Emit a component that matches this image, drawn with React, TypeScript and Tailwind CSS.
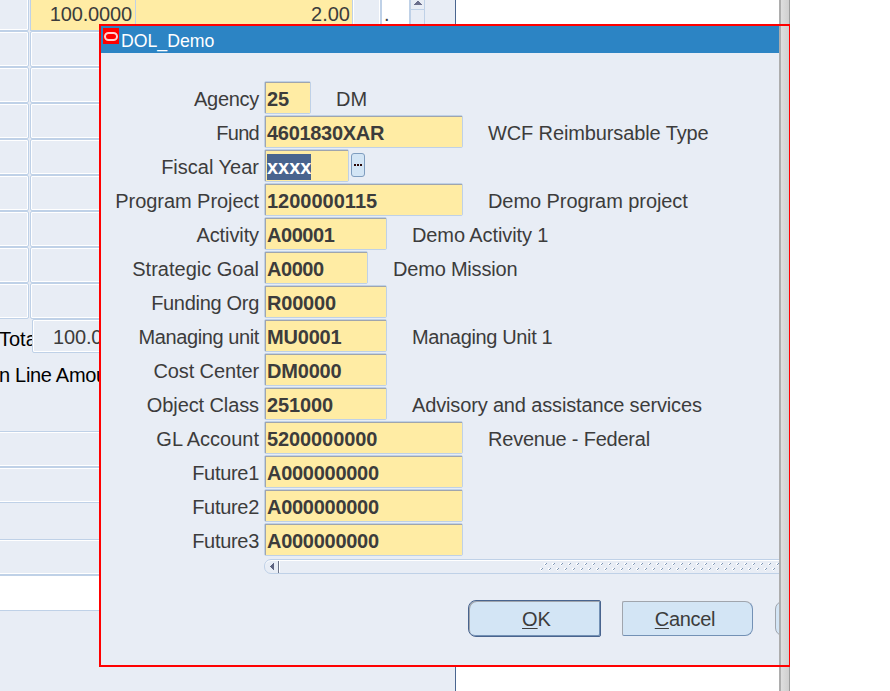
type Field = {
  label: string;
  labelFit?: string;
  value: string;
  valueFit?: string;
  width: string;
  note?: string;
  noteFit?: string;
  selected?: boolean;
};

const fields: Field[] = [
  { label: 'Agency', labelFit: 'tracking-[-0.3px]', value: '25', width: 'w-[47px]', note: 'DM' },
  { label: 'Fund', labelFit: 'tracking-[-0.7px]', value: '4601830XAR', valueFit: 'tracking-[-0.3px]', width: 'w-[199px]', note: 'WCF Reimbursable Type', noteFit: 'tracking-[-0.12px]' },
  { label: 'Fiscal Year', value: 'xxxx', width: 'w-[85px]', selected: true },
  { label: 'Program Project', labelFit: 'tracking-[-0.05px]', value: '1200000115', width: 'w-[199px]', note: 'Demo Program project', noteFit: 'tracking-[-0.07px]' },
  { label: 'Activity', labelFit: 'tracking-[-0.1px]', value: 'A00001', valueFit: 'tracking-[-0.45px]', width: 'w-[123px]', note: 'Demo Activity 1', noteFit: 'tracking-[-0.1px]' },
  { label: 'Strategic Goal', value: 'A0000', valueFit: 'tracking-[-0.45px]', width: 'w-[104px]', note: 'Demo Mission', noteFit: 'tracking-[-0.2px]' },
  { label: 'Funding Org', labelFit: 'tracking-[-0.3px]', value: 'R00000', valueFit: 'tracking-[-0.2px]', width: 'w-[123px]' },
  { label: 'Managing unit', labelFit: 'tracking-[-0.4px]', value: 'MU0001', valueFit: 'tracking-[-0.2px]', width: 'w-[123px]', note: 'Managing Unit 1', noteFit: 'tracking-[-0.35px]' },
  { label: 'Cost Center', labelFit: 'tracking-[-0.1px]', value: 'DM0000', valueFit: 'tracking-[-0.2px]', width: 'w-[123px]' },
  { label: 'Object Class', labelFit: 'tracking-[-0.1px]', value: '251000', valueFit: 'tracking-[-0.1px]', width: 'w-[123px]', note: 'Advisory and assistance services', noteFit: 'tracking-[-0.15px]' },
  { label: 'GL Account', value: '5200000000', valueFit: 'tracking-[-0.1px]', width: 'w-[199px]', note: 'Revenue - Federal', noteFit: 'tracking-[-0.22px]' },
  { label: 'Future1', labelFit: 'tracking-[-0.3px]', value: 'A000000000', valueFit: 'tracking-[-0.28px]', width: 'w-[199px]' },
  { label: 'Future2', labelFit: 'tracking-[-0.3px]', value: 'A000000000', valueFit: 'tracking-[-0.28px]', width: 'w-[199px]' },
  { label: 'Future3', labelFit: 'tracking-[-0.3px]', value: 'A000000000', valueFit: 'tracking-[-0.28px]', width: 'w-[199px]' },
];

const cell = 'shrink-0 rounded-[2px] border border-[#bfd1e7] shadow-[inset_0_0_0_1px_#fff]';

function LedgerTable() {
  return (
    <div className="-mt-[5px]">
      <div className="flex h-9">
        <div className={`${cell} -ml-1 mr-px w-[33px]`} />
        <div className="flex h-9 w-[105px] shrink-0 items-end justify-end border border-r-0 border-[#bfd1e7] bg-[#ffeca4] pb-[4px] pr-[3px]">
          <span className="leading-[23px] tracking-[-0.15px]">100.0000</span>
        </div>
        <div className="flex h-9 w-[218px] shrink-0 items-end justify-end border border-[#bfd1e7] bg-[#ffeca4] pb-[4px] pr-[2px]">
          <span className="leading-[23px]">2.00</span>
        </div>
        <div className="h-9 w-[27px] shrink-0 border-x border-white" />
        <div className="flex h-9 w-[31px] shrink-0 items-end border-x-2 border-[#bfd1e7] bg-white pb-[5px] pl-[2px]">
          <span className="leading-[23px]">.</span>
        </div>
        <div className="flex h-9 w-[14px] shrink-0 flex-col border-r border-[#bfd1e7]">
          <div className="flex h-[15px] items-end justify-center border-b border-[#bfd1e7] pb-[4px]">
            <svg width="8" height="4" viewBox="0 0 8 4" shapeRendering="crispEdges">
              <path d="M3 0h2v1h1v1h1v1h1v1H0V3h1V2h1V1h1z" fill="#6b6f8c" />
            </svg>
          </div>
        </div>
      </div>
      {Array.from({ length: 8 }, (_, i) => (
        <div key={i} className="flex h-9">
          <div className={`${cell} -ml-1 mr-px w-[33px]`} />
          <div className={`${cell} w-[105px]`} />
        </div>
      ))}
    </div>
  );
}

function LedgerWindow() {
  return (
    <div className="h-[691px] w-[456px] overflow-hidden border-r border-[#4a6690] bg-[#e8edf5]">
      <LedgerTable />
      <div className="flex h-[34px]">
        <div className="w-8 whitespace-nowrap pt-[9px] text-black">
          <span className="-ml-px block leading-[23px]">Tota</span>
        </div>
        <div className={`${cell} relative w-[120px] bg-[#e8edf5] pl-[20px] pt-[6px]`}>
          <span className="block leading-[23px] tracking-[-0.15px]">100.0000</span>
        </div>
      </div>
      <div className="h-[78px] whitespace-nowrap pt-[11px] text-black">
        <span className="-ml-px block leading-[23px] tracking-[-0.3px]">n Line Amount</span>
      </div>
      <div className={`${cell} -ml-1 h-9`} />
      <div className={`${cell} -ml-1 h-9`} />
      <div className={`${cell} -ml-1 mt-9 h-9`} />
      <div className={`${cell} -ml-1 h-9 bg-white`} />
    </div>
  );
}

function FieldRow({ label, labelFit = '', value, valueFit = '', width, note, noteFit = '', selected }: Field) {
  return (
    <div className="flex h-[34px] items-start whitespace-nowrap">
      <div className={`${labelFit} w-[158px] shrink-0 pt-[7px] text-right leading-[23px]`}>{label}</div>
      <div className={`${width} ml-[5px] h-[33px] shrink-0 rounded-[2px] border border-[#bfd1e7]`}>
        <div className="h-[31px] border-l border-t border-[#a0a5ad] bg-[#ffeca4] pl-px pt-[3px] font-bold">
          <span
            className={
              selected
                ? 'block h-[26px] w-[44px] bg-[#49648e] leading-[27px] text-white'
                : `${valueFit} block leading-[27px]`
            }
          >
            {value}
          </span>
        </div>
      </div>
      {selected && (
        <button className="ml-[2px] mt-[4px] flex h-[24px] w-[14px] items-center justify-center gap-px rounded-[3px] border border-[#7f9dbf] bg-[#d3e5f5] pb-[1px]">
          <span className="size-[2px] bg-[#2a0808]" />
          <span className="size-[2px] bg-[#2a0808]" />
          <span className="size-[2px] bg-[#2a0808]" />
        </button>
      )}
      {note && <div className={`${noteFit} ml-[25px] pt-[7px] leading-[23px]`}>{note}</div>}
    </div>
  );
}

function HorizontalScrollbar() {
  return (
    <div className="ml-[163px] mt-[2px] flex h-[15px] w-[530px] items-center rounded-l-[7px] border border-[#bfd1e7] pl-[5px] shadow-[inset_0_1px_0_#fff]">
      <svg width="4" height="7" viewBox="0 0 4 7" shapeRendering="crispEdges">
        <path d="M0 3h1V2h1V1h1V0h1v7H3V6H2V5H1V4H0z" fill="#5f6480" />
      </svg>
      <div className="ml-[4px] h-[12px] w-px bg-[#6d7488]" />
      <div className="h-[11px] w-px bg-white" />
      <svg className="ml-[260px]" width="245" height="8" shapeRendering="crispEdges">
        <defs>
          <pattern id="grip" width="8" height="8" patternUnits="userSpaceOnUse">
            <path d="M4 0h2v2H4zM5 2h1v1H5zM0 5h2v2H0zM1 7h1v1H1z" fill="#fff" />
            <path d="M6 0h1v1H6zM5 1h1v1H5zM2 5h1v1H2zM1 6h1v1H1z" fill="#7f97b5" />
          </pattern>
        </defs>
        <rect width="245" height="8" fill="url(#grip)" />
      </svg>
    </div>
  );
}

function Dialog() {
  return (
    <div className="absolute left-[99px] top-[24px] h-[643px] w-[691px] border-2 border-r border-[#ff0000]">
      <div className="h-[639px] w-[678px] overflow-hidden bg-[#e8edf5]">
        <div className="flex h-[27px] bg-[#2c84c4] text-white">
          <div className="ml-[2px] mt-[2px] flex size-[16px] items-center justify-center bg-[#ff0000]">
            <div className="h-[9px] w-[14px] rounded-[5px] border-2 border-[#ffd0d0]" />
          </div>
          <span className="ml-[2px] pt-[4px] text-[17.7px] leading-[22px]">DOL_Demo</span>
        </div>
        <div className="mt-[28px]">
          {fields.map((f) => (
            <FieldRow key={f.label} {...f} />
          ))}
        </div>
        <HorizontalScrollbar />
        <div className="ml-[367px] mt-[26px] flex w-[500px] items-start">
          <button className="h-[37px] w-[133px] rounded-l-[8px] rounded-r-[2px] border border-[#49648e] bg-[#d3e5f5] pl-[4px] leading-[34px] shadow-[inset_1px_1px_0_#a0a5ad,inset_-1px_-1px_0_#7391b5]">
            <span className="underline decoration-1 underline-offset-[2px]">O</span>K
          </button>
          <button className="ml-[21px] mt-px h-[35px] w-[131px] rounded-l-[2px] rounded-r-[8px] border border-b-[#7391b5] border-l-[#a0a5ad] border-r-[#7391b5] border-t-[#a0a5ad] bg-[#d3e5f5] pr-[5px] leading-[32px] tracking-[-0.3px]">
            <span className="underline decoration-1 underline-offset-[2px]">C</span>ancel
          </button>
          <div className="ml-[22px] mt-px h-[35px] w-[131px] rounded-[8px] border border-[#a0a5ad] bg-[#d3e5f5]" />
        </div>
      </div>
    </div>
  );
}

export default function App() {
  return (
    <div className="relative flex h-[691px] w-[890px] overflow-hidden bg-white font-['Liberation_Sans',Arial,sans-serif] text-[20px] text-[#3c3c3c]">
      <LedgerWindow />
      <div className="ml-[323px] h-[691px] w-[11px] border-l-2 border-r border-l-[#adadad] border-r-[#9c9c9c] bg-linear-to-r from-[#dedede] to-[#cfcfcf]" />
      <Dialog />
    </div>
  );
}
